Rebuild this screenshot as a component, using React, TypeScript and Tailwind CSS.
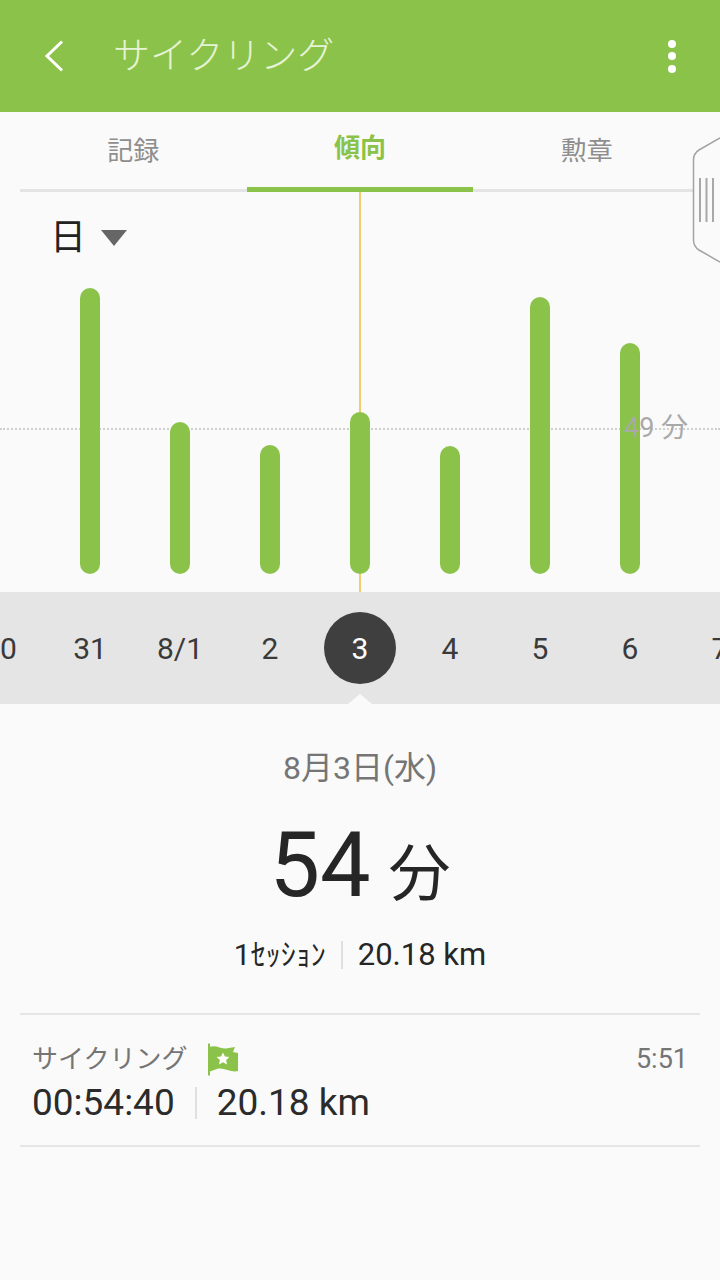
import React from "react";

const FONT = { fontFamily: '"Roboto", "Noto Sans CJK JP", sans-serif' };

const TABS = [
  { label: "記録", active: false },
  { label: "傾向", active: true },
  { label: "勲章", active: false },
];

/* bar heights in px, one per day */
const BARS = [286, 152, 129, 162, 128, 277, 231];
const DAYS = ["30", "31", "8/1", "2", "3", "4", "5", "6", "7"];

function EdgeHandle() {
  return (
    <svg viewBox="0 0 28 126" className="absolute right-0 top-[137px] h-[126px] w-[28px]" aria-hidden>
      <path
        d="M28 1 L7 13 Q1.5 16.5 1.5 23 L1.5 103 Q1.5 109.5 7 113 L28 125"
        fill="#fafafa"
        stroke="#a3a3a3"
        strokeWidth={1.5}
      />
      <path d="M8 41V85M14.5 41V85M21 41V85" fill="none" stroke="#a8a8a8" strokeWidth={2} />
    </svg>
  );
}

function FlagIcon() {
  return (
    <svg viewBox="0 0 32 33" className="ml-[20px] h-[33px] w-[32px]" aria-hidden>
      <path d="M1 0.5h2v32H1z" fill="#8bc34a" />
      <path d="M2 4 C10 1 14 7 22 5 L28 4 L26 9 L31 10 L31 28 C24 30 17 24 10 26 C7 27 4 28 2 29Z" fill="#8bc34a" />
      <path d="M16 9.5l1.9 4.1 4.5.5-3.3 3 .9 4.4-4-2.2-4 2.2.9-4.4-3.3-3 4.5-.5z" fill="#fff" />
    </svg>
  );
}

export default function App() {
  return (
    <div className="relative h-[1280px] w-[720px] overflow-hidden bg-[#fafafa]" style={FONT}>
      {/* app bar */}
      <header className="flex h-[112px] items-center bg-[#8bc34a] pl-[44px] pr-[44px]">
        <svg viewBox="0 0 20 32" className="h-[32px] w-[20px]" aria-hidden>
          <path d="M18 1.5 L3 16 L18 30.5" fill="none" stroke="#fff" strokeWidth={3} />
        </svg>
        <h1 className="ml-[49px] text-[37px] font-light leading-none text-[#e6f3d6]">サイクリング</h1>
        <div className="ml-auto flex flex-col gap-[4.5px]">
          <span className="h-[8px] w-[8px] rounded-full bg-white" />
          <span className="h-[8px] w-[8px] rounded-full bg-white" />
          <span className="h-[8px] w-[8px] rounded-full bg-white" />
        </div>
      </header>

      {/* tabs */}
      <nav className="mx-[20px] flex h-[80px] border-b-[3px] border-[#e4e4e4]">
        {TABS.map((t) => (
          <div
            key={t.label}
            className={`-mb-[3px] flex flex-1 items-center justify-center pb-[2px] text-[26px] ${
              t.active ? "border-b-[5px] border-[#8bc34a] font-bold text-[#8bc34a]" : "text-[#8e8e8e]"
            }`}
          >
            {t.label}
          </div>
        ))}
      </nav>

      {/* chart */}
      <section className="relative h-[400px]">
        <div className="absolute bottom-0 left-[359px] top-0 w-[2px] bg-[#f0cf6a]" />
        <div className="absolute left-0 right-0 top-[236px] border-t-2 border-dotted border-[#cfcfcf]" />
        <div className="relative flex h-full items-end justify-center gap-[70px] pb-[18px]">
          {BARS.map((h, i) => (
            <div key={i} className="w-[20px] rounded-full bg-[#8bc34a]" style={{ height: h }} />
          ))}
        </div>
        <div className="absolute left-[50px] top-[28px] flex items-center">
          <span className="text-[36px] leading-none text-[#222]">日</span>
          <span className="ml-[15px] h-0 w-0 border-x-[13px] border-t-[16px] border-x-transparent border-t-[#666]" />
        </div>
        <span className="absolute left-[610px] top-[217px] bg-[#fafafa]/0 pl-[14px] text-[27px] leading-[38px] text-[#a9a9a9]">
          49 分
        </span>
      </section>

      {/* day strip */}
      <div className="relative flex h-[112px] items-center overflow-hidden bg-[#e5e5e5]">
        <div className="-ml-[45px] flex shrink-0">
          {DAYS.map((d) => (
            <div key={d} className="flex h-[72px] w-[90px] shrink-0 items-center justify-center">
              {d === "3" ? (
                <span className="flex h-[72px] w-[72px] items-center justify-center rounded-full bg-[#3f3f3f] text-[30px] text-white">
                  {d}
                </span>
              ) : (
                <span className="whitespace-nowrap text-[30px] text-[#3a3a3a]">{d}</span>
              )}
            </div>
          ))}
        </div>
        <span className="absolute bottom-0 left-[348px] h-0 w-0 border-x-[12px] border-b-[10px] border-x-transparent border-b-[#fafafa]" />
      </div>

      {/* selected day summary */}
      <section className="flex flex-col items-center">
        <p className="mt-[43px] text-[32px] leading-[42px] text-[#757575]">8月3日(水)</p>
        <p className="mt-[24px] flex items-baseline leading-none text-[#262626]">
          <span className="text-[90px] leading-[106px]">54</span>
          <span className="ml-[18px] text-[62px]">分</span>
        </p>
        <div className="mt-[16px] flex items-center text-[#262626]">
          <span className="text-[30px] leading-[40px]">1ｾｯｼｮﾝ</span>
          <span className="mx-[15px] h-[28px] w-[2px] bg-[#e0e0e0]" />
          <span className="text-[31px] leading-[40px]">20.18 km</span>
        </div>
      </section>

      {/* session row */}
      <div className="mx-[20px] mt-[38px] border-y-2 border-[#e6e6e6] px-[12px] pb-[19px] pt-[25px]">
        <div className="flex items-center">
          <span className="text-[26px] leading-[38px] text-[#757575]">サイクリング</span>
          <FlagIcon />
          <span className="ml-auto text-[27px] leading-[38px] text-[#757575]">5:51</span>
        </div>
        <div className="mt-[2px] flex items-center text-[37px] leading-[46px] text-[#2b2b2b]">
          <span>00:54:40</span>
          <span className="mx-[20px] h-[32px] w-[2px] bg-[#e0e0e0]" />
          <span>20.18 km</span>
        </div>
      </div>

      <EdgeHandle />
    </div>
  );
}
